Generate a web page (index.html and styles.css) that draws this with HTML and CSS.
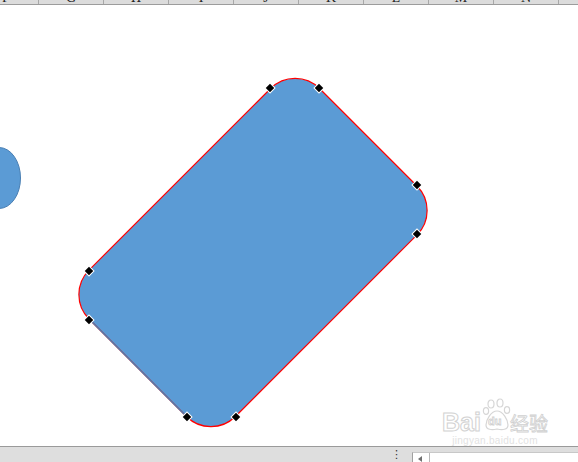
FILE: index.html
```html
<!DOCTYPE html>
<html>
<head>
<meta charset="utf-8">
<link rel="stylesheet" href="styles.css">
</head>
<body>
<div class="app">
  <div class="colhead">
    <div class="cell first"><span>F</span></div>
    <div class="cell"><span>G</span></div>
    <div class="cell"><span>H</span></div>
    <div class="cell"><span>I</span></div>
    <div class="cell"><span>J</span></div>
    <div class="cell"><span>K</span></div>
    <div class="cell"><span>L</span></div>
    <div class="cell"><span>M</span></div>
    <div class="cell"><span>N</span></div>
  </div>
  <div class="canvas">
    <svg class="drawing" width="578" height="441" viewBox="0 5 578 441" xmlns="http://www.w3.org/2000/svg">
      <ellipse cx="-1" cy="178" rx="21.5" ry="30.5" fill="#5b9bd5" stroke="#4a7fb3" stroke-width="1"/>
      <g transform="rotate(-45 253 252.5)">
        <rect x="90" y="149" width="326" height="207" rx="34.6" ry="34.6" fill="#5b9bd5" stroke="#ff0000" stroke-width="1.2"/>
        <line x1="90" y1="183.6" x2="90" y2="321.4" stroke="#4d7fb0" stroke-width="1.3"/>
      </g>
      <g fill="#000" stroke="#fff" stroke-width="1">
        <rect x="-3.5" y="-3.5" width="7" height="7" transform="translate(270 88) rotate(45)"/>
        <rect x="-3.5" y="-3.5" width="7" height="7" transform="translate(319 88) rotate(45)"/>
        <rect x="-3.5" y="-3.5" width="7" height="7" transform="translate(417 185) rotate(45)"/>
        <rect x="-3.5" y="-3.5" width="7" height="7" transform="translate(417 234) rotate(45)"/>
        <rect x="-3.5" y="-3.5" width="7" height="7" transform="translate(187 417) rotate(45)"/>
        <rect x="-3.5" y="-3.5" width="7" height="7" transform="translate(236 417) rotate(45)"/>
        <rect x="-3.5" y="-3.5" width="7" height="7" transform="translate(89 271) rotate(45)"/>
        <rect x="-3.5" y="-3.5" width="7" height="7" transform="translate(89 320) rotate(45)"/>
      </g>
    </svg>
    <div class="watermark">
      <div class="wm-row">
        <span class="wm-bai">Bai</span>
        <span class="wm-du">
          <svg class="paw" width="30" height="34" viewBox="0 0 30 34" xmlns="http://www.w3.org/2000/svg">
            <g fill="none" stroke="#d6d6d6" stroke-width="1.2">
              <ellipse cx="9" cy="6" rx="3" ry="4"/>
              <ellipse cx="18" cy="5" rx="3" ry="4"/>
              <ellipse cx="4" cy="13" rx="2.6" ry="3.4"/>
              <ellipse cx="25" cy="12" rx="2.6" ry="3.4"/>
              <path d="M15 13 C 9 13 4 22 4 27 C 4 32 10 32 15 31 C 20 32 26 32 26 27 C 26 22 21 13 15 13 Z"/>
            </g>
          </svg>
          <span class="du-text">du</span>
        </span>
        <span class="wm-jy">经验</span>
      </div>
      <div class="wm-url">jingyan.baidu.com</div>
    </div>
  </div>
  <div class="statusbar">
    <span class="dots">⋮</span>
    <div class="hscroll">
      <div class="arrowbtn"><span class="tri"></span></div>
    </div>
  </div>
</div>
</body>
</html>
```
FILE: styles.css
```css
html, body {
  margin: 0;
  padding: 0;
  background: #ffffff;
  overflow: hidden;
}
.app {
  width: 578px;
  height: 462px;
  display: flex;
  flex-direction: column;
  font-family: "Liberation Serif", "DejaVu Serif", serif;
}
.colhead {
  height: 4px;
  flex: none;
  display: flex;
  background: #dcdcdc;
  border-bottom: 1px solid #9c9c9c;
  overflow: hidden;
  margin-left: -26px;
}
.cell {
  width: 64px;
  flex: none;
  border-right: 1px solid #a8a8a8;
  position: relative;
  overflow: hidden;
  height: 4px;
}
.cell span {
  position: absolute;
  left: 0;
  right: 0;
  bottom: -1px;
  text-align: center;
  font-size: 14px;
  line-height: 14px;
  color: #222;
}
.canvas {
  flex: 1;
  position: relative;
  overflow: hidden;
}
.drawing {
  display: block;
}
.watermark {
  position: absolute;
  left: 442px;
  top: 390px;
  width: 106px;
  color: #dadada;
  font-family: "Liberation Sans", Arial, sans-serif;
}
.wm-row {
  display: flex;
  align-items: flex-end;
  height: 39px;
  white-space: nowrap;
}
.wm-bai {
  flex: none;
  font-size: 25px;
  font-weight: bold;
  line-height: 24px;
  color: #fff;
  -webkit-text-stroke: 1px #d2d2d2;
}
.wm-du {
  flex: none;
  position: relative;
  width: 28px;
  height: 36px;
  margin-left: 1px;
}
.paw {
  position: absolute;
  left: 0;
  top: 0;
}
.du-text {
  position: absolute;
  left: 6px;
  top: 17px;
  font-size: 11px;
  font-weight: bold;
  color: #fff;
  -webkit-text-stroke: 0.8px #cfcfcf;
}
.wm-jy {
  flex: none;
  white-space: nowrap;
  font-family: "Noto Sans CJK SC", sans-serif;
  font-size: 19px;
  line-height: 23px;
  color: #fff;
  -webkit-text-stroke: 0.8px #d0d0d0;
  margin-left: 0;
}
.wm-url {
  font-size: 10px;
  line-height: 11px;
  color: #e2e2e2;
  text-align: center;
  margin-top: 1px;
  letter-spacing: 0.3px;
  white-space: nowrap;
}
.statusbar {
  height: 15px;
  flex: none;
  background: #dedede;
  border-top: 1px solid #9a9a9a;
  display: flex;
  align-items: flex-end;
  position: relative;
}
.dots {
  margin-left: 391px;
  width: 21px;
  height: 13px;
  font-size: 11px;
  line-height: 12px;
  color: #333;
  font-family: "DejaVu Sans", sans-serif;
}
.hscroll {
  flex: 1;
  height: 9px;
  background: #ffffff;
  border-left: 1px solid #a0a0a0;
  border-top: 1px solid #c8c8c8;
  display: flex;
}
.arrowbtn {
  width: 16px;
  height: 9px;
  border-right: 1px solid #b8b8b8;
  position: relative;
}
.tri {
  position: absolute;
  left: 5px;
  top: 3px;
  width: 0;
  height: 0;
  border-top: 3px solid transparent;
  border-bottom: 3px solid transparent;
  border-right: 4px solid #707070;
}
```
